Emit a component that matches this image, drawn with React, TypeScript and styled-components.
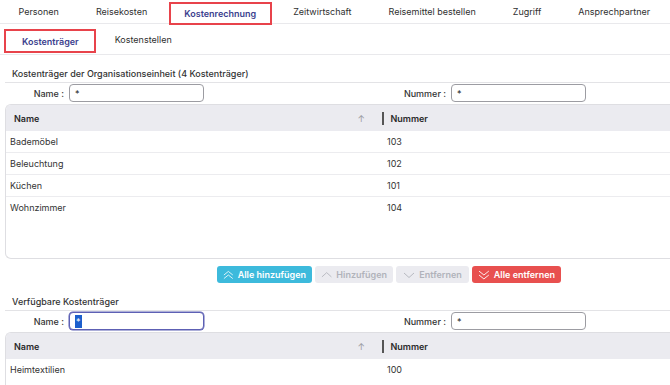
import React from "react";
import styled, { createGlobalStyle, css } from "styled-components";

const GlobalStyle = createGlobalStyle`
  html, body { margin: 0; padding: 0; background: #ffffff; }
  body { font-family: Inter, "Noto Sans", "Liberation Sans", sans-serif; overflow: hidden; }
  * { box-sizing: border-box; }
`;

const Page = styled.div`
  width: 670px;
  height: 385px;
  overflow: hidden;
  font-size: 9px;
  color: #333;
`;

const TopTabs = styled.nav`
  display: flex;
  height: 24px;
  border-bottom: 1px solid #e9e9ec;
`;

const TopTab = styled.div<{ $active?: boolean }>`
  display: flex;
  align-items: center;
  height: 23px;
  padding: 0 18.5px;
  font-weight: 400;
  color: #2f2f2f;
  white-space: nowrap;
  ${(p) =>
    p.$active &&
    css`
      color: #3c3f8e;
      font-weight: 600;
      border: 2px solid #e8434b;
      margin: 2px 3px 0 3px;
      height: 23px;
      padding: 0 13.5px 1px;
      position: relative;
      z-index: 1;
    `}
`;

const SubTabs = styled.nav`
  display: flex;
  height: 31px;
  padding-left: 3px;
  border-bottom: 1px solid #e9e9ec;
`;

const SubTab = styled.div<{ $active?: boolean }>`
  display: flex;
  align-items: center;
  padding: 1px 19px 0;
  font-weight: 400;
  color: #2f2f2f;
  white-space: nowrap;
  ${(p) =>
    p.$active &&
    css`
      color: #3c3f8e;
      font-weight: 600;
      border: 2px solid #e8434b;
      margin: 5px 0 1px 1px;
      padding: 1px 15px 0 16px;
    `}
`;

const Section = styled.section`
  margin-left: 5px;
`;

const SectionTitle = styled.div`
  display: flex;
  align-items: flex-end;
  height: 28px;
  padding: 0 0 3px 7px;
  line-height: 11px;
  font-weight: 500;
  color: #333;
  border-bottom: 1px solid #e3e3e6;
`;

const FilterRow = styled.div`
  display: grid;
  grid-template-columns: 377px 1fr;
  height: 21px;
  padding-top: 1px;
`;

const FilterCell = styled.div`
  display: flex;
  align-items: flex-start;
  gap: 5px;
`;

const FilterLabel = styled.label<{ $width: number }>`
  width: ${(p) => p.$width}px;
  height: 18px;
  display: flex;
  align-items: center;
  justify-content: flex-end;
  font-weight: 500;
  color: #333;
`;

const Field = styled.div<{ $focused?: boolean }>`
  width: 135px;
  height: 18px;
  border: 1px solid ${(p) => (p.$focused ? "#5d60b4" : "#9c9ca2")};
  border-radius: 4px;
  display: flex;
  align-items: center;
  padding-left: 5px;
  font-size: 9px;
  color: #222;
  background: #fff;
  ${(p) =>
    p.$focused &&
    css`
      box-shadow: 0 0 0 0.5px #5d60b4;
    `}
`;

const Selected = styled.span`
  background: #1c5fcc;
  color: #fff;
  padding: 1px 1px;
  line-height: 11px;
`;

const Table = styled.div<{ $height: number }>`
  width: 680px;
  height: ${(p) => p.$height}px;
  border: 1px solid #dedee2;
  border-right: none;
  border-radius: 6px;
  overflow: hidden;
`;

const HeaderRow = styled.div`
  display: grid;
  grid-template-columns: 376px 1fr;
  height: 26px;
  background: #ebebf0;
  font-weight: 600;
  color: #2a2a2a;
`;

const HeaderName = styled.div`
  display: flex;
  align-items: center;
  justify-content: space-between;
  padding: 0 17px 0 8px;
`;

const SortArrow = styled.span`
  color: #9a9aa0;
  font-weight: 400;
  font-size: 9px;
`;

const HeaderNummer = styled.div`
  display: flex;
  align-items: center;
  gap: 7px;
`;

const Divider = styled.span`
  width: 1.5px;
  height: 13px;
  background: #555;
`;

const Row = styled.div<{ $last?: boolean }>`
  display: grid;
  grid-template-columns: 376px 1fr;
  height: 22px;
  align-items: center;
  border-bottom: 1px solid ${(p) => (p.$last ? "transparent" : "#ececef")};
  color: #333;
`;

const Cell = styled.div<{ $pad: number }>`
  padding-left: ${(p) => p.$pad}px;
`;

const ButtonRow = styled.div`
  display: flex;
  gap: 3px;
  margin-top: 7px;
  padding-left: 217px;
  height: 17px;
`;

const ActionButton = styled.button<{ $variant: "primary" | "disabled" | "danger"; $width: number }>`
  width: ${(p) => p.$width}px;
  height: 17px;
  border: none;
  border-radius: 3px;
  display: flex;
  align-items: center;
  justify-content: center;
  gap: 4px;
  padding: 0 6px;
  font-family: inherit;
  font-size: 9px;
  font-weight: 600;
  white-space: nowrap;
  ${(p) =>
    p.$variant === "primary"
      ? css`
          background: #3dbadc;
          color: #fff;
        `
      : p.$variant === "danger"
      ? css`
          background: #e8504f;
          color: #fff;
        `
      : css`
          background: #ebebf0;
          color: #b1b3bb;
        `}
`;

type ChevronKind = "doubleUp" | "up" | "down" | "doubleDown";

const Chevron = ({ kind }: { kind: ChevronKind }) => {
  const lines: Record<ChevronKind, string[]> = {
    doubleUp: ["1,6 6,2 11,6", "1,10 6,6 11,10"],
    up: ["1,8 6,3.5 11,8"],
    down: ["1,4 6,8.5 11,4"],
    doubleDown: ["1,2 6,6 11,2", "1,6 6,10 11,6"],
  };
  return (
    <svg width="12" height="12" viewBox="0 0 12 12" fill="none" stroke="currentColor" strokeWidth="0.9">
      {lines[kind].map((pts) => (
        <polyline key={pts} points={pts} strokeLinejoin="miter" />
      ))}
    </svg>
  );
};

const tabs = [
  "Personen",
  "Reisekosten",
  "Kostenrechnung",
  "Zeitwirtschaft",
  "Reisemittel bestellen",
  "Zugriff",
  "Ansprechpartner",
];

type Item = { name: string; nummer: string };

const assigned: Item[] = [
  { name: "Bademöbel", nummer: "103" },
  { name: "Beleuchtung", nummer: "102" },
  { name: "Küchen", nummer: "101" },
  { name: "Wohnzimmer", nummer: "104" },
];

const available: Item[] = [{ name: "Heimtextilien", nummer: "100" }];

const DataTable = ({ items, height }: { items: Item[]; height: number }) => (
  <Table $height={height}>
    <HeaderRow>
      <HeaderName>
        <span>Name</span>
        <SortArrow>↑</SortArrow>
      </HeaderName>
      <HeaderNummer>
        <Divider />
        <span>Nummer</span>
      </HeaderNummer>
    </HeaderRow>
    {items.map((it, i) => (
      <Row key={it.name} $last={i === items.length - 1}>
        <Cell $pad={4}>{it.name}</Cell>
        <Cell $pad={5}>{it.nummer}</Cell>
      </Row>
    ))}
  </Table>
);

const Filters = ({ focused }: { focused?: boolean }) => (
  <FilterRow>
    <FilterCell>
      <FilterLabel $width={59}>Name :</FilterLabel>
      <Field $focused={focused}>{focused ? <Selected>*</Selected> : "*"}</Field>
    </FilterCell>
    <FilterCell>
      <FilterLabel $width={64}>Nummer :</FilterLabel>
      <Field>*</Field>
    </FilterCell>
  </FilterRow>
);

export default function App() {
  return (
    <>
      <GlobalStyle />
      <Page>
        <TopTabs>
          {tabs.map((t) => (
            <TopTab key={t} $active={t === "Kostenrechnung"}>
              {t}
            </TopTab>
          ))}
        </TopTabs>
        <SubTabs>
          <SubTab $active>Kostenträger</SubTab>
          <SubTab>Kostenstellen</SubTab>
        </SubTabs>
        <Section>
          <SectionTitle>Kostenträger der Organisationseinheit (4 Kostenträger)</SectionTitle>
          <Filters />
          <DataTable items={assigned} height={155} />
        </Section>
        <ButtonRow>
          <ActionButton $variant="primary" $width={95}>
            <Chevron kind="doubleUp" />
            Alle hinzufügen
          </ActionButton>
          <ActionButton $variant="disabled" $width={78} disabled>
            <Chevron kind="up" />
            Hinzufügen
          </ActionButton>
          <ActionButton $variant="disabled" $width={73} disabled>
            <Chevron kind="down" />
            Entfernen
          </ActionButton>
          <ActionButton $variant="danger" $width={89}>
            <Chevron kind="doubleDown" />
            Alle entfernen
          </ActionButton>
        </ButtonRow>
        <Section>
          <SectionTitle>Verfügbare Kostenträger</SectionTitle>
          <Filters focused />
          <DataTable items={available} height={90} />
        </Section>
      </Page>
    </>
  );
}
